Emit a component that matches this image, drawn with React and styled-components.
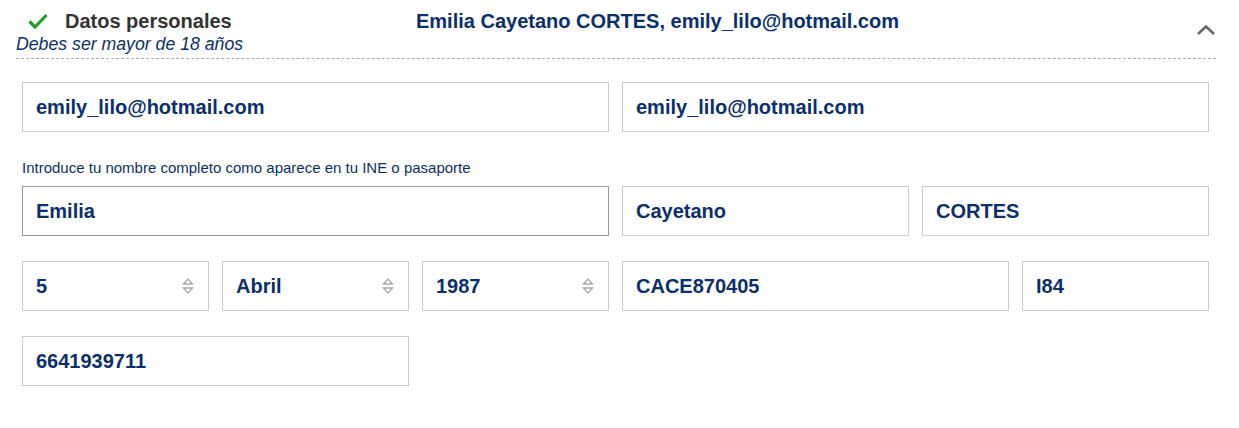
import styled, { createGlobalStyle } from "styled-components";

const GlobalStyle = createGlobalStyle`
  body {
    margin: 0;
    background: #fff;
    font-family: "Liberation Sans", Arial, sans-serif;
  }
`;

const Page = styled.div`
  padding: 0 23px 0 16px;
`;

const Header = styled.div`
  display: grid;
  grid-template-columns: 400px 1fr 40px;
  align-items: start;
  border-bottom: 1px dashed #aaa;
  padding: 9px 0 4px;
`;

const TitleBlock = styled.div`
  display: flex;
  flex-direction: column;
`;

const TitleRow = styled.div`
  display: flex;
  align-items: center;
  gap: 17px;
  padding-left: 12px;
  height: 24px;
`;

const Title = styled.span`
  font-size: 20px;
  font-weight: bold;
  color: #333;
`;

const Hint = styled.span`
  font-size: 17.7px;
  line-height: 20px;
  font-style: italic;
  color: #0b2f6b;
  margin-top: 1px;
`;

const Summary = styled.div`
  font-size: 20px;
  font-weight: bold;
  color: #0b2f6b;
  height: 24px;
  line-height: 24px;
`;

const Toggle = styled.div`
  display: flex;
  justify-content: flex-end;
  padding-top: 15px;
`;

const Form = styled.div`
  display: grid;
  grid-template-columns: repeat(12, 87px);
  column-gap: 13px;
  row-gap: 25px;
  padding: 23px 0 0 6px;
`;

const Note = styled.div`
  grid-column: span 12;
  font-size: 15px;
  line-height: 17px;
  color: #0b2f6b;
  margin: 2px 0 -15px;
`;

const Field = styled.div`
  grid-column: span ${(p) => p.$span};
  box-sizing: border-box;
  height: 50px;
  border: 1px solid ${(p) => (p.$focus ? "#999" : "#ccc")};
  display: flex;
  align-items: center;
  justify-content: space-between;
  padding: 0 13px;
  font-size: 20px;
  font-weight: bold;
  color: #0b2f6b;
`;

const Filler = styled.div`
  grid-column: span ${(p) => p.$span};
`;

const Check = () => (
  <svg width="20" height="16" viewBox="0 0 20 16">
    <path d="M1.5 8.5 L7 14 L18.5 2" fill="none" stroke="#1e9e2a" strokeWidth="3.2" />
  </svg>
);

const Chevron = () => (
  <svg width="20" height="11" viewBox="0 0 20 11">
    <path d="M2 10 L10 2.5 L18 10" fill="none" stroke="#666" strokeWidth="2.6" />
  </svg>
);

const Sorter = () => (
  <svg width="14" height="20" viewBox="0 0 14 20">
    <path d="M2.5 8 L7 3 L11.5 8 Z" fill="none" stroke="#aaa" strokeWidth="1.3" />
    <path d="M2.5 12 L7 17 L11.5 12 Z" fill="none" stroke="#aaa" strokeWidth="1.3" />
  </svg>
);

export default function App() {
  return (
    <Page>
      <GlobalStyle />
      <Header>
        <TitleBlock>
          <TitleRow>
            <Check />
            <Title>Datos personales</Title>
          </TitleRow>
          <Hint>Debes ser mayor de 18 años</Hint>
        </TitleBlock>
        <Summary>Emilia Cayetano CORTES, emily_lilo@hotmail.com</Summary>
        <Toggle>
          <Chevron />
        </Toggle>
      </Header>

      <Form>
        <Field $span={6}>emily_lilo@hotmail.com</Field>
        <Field $span={6}>emily_lilo@hotmail.com</Field>

        <Note>Introduce tu nombre completo como aparece en tu INE o pasaporte</Note>

        <Field $span={6} $focus>Emilia</Field>
        <Field $span={3}>Cayetano</Field>
        <Field $span={3}>CORTES</Field>

        <Field $span={2}>
          5 <Sorter />
        </Field>
        <Field $span={2}>
          Abril <Sorter />
        </Field>
        <Field $span={2}>
          1987 <Sorter />
        </Field>
        <Field $span={4}>CACE870405</Field>
        <Field $span={2}>I84</Field>

        <Field $span={4}>6641939711</Field>
        <Filler $span={8} />
      </Form>
    </Page>
  );
}
